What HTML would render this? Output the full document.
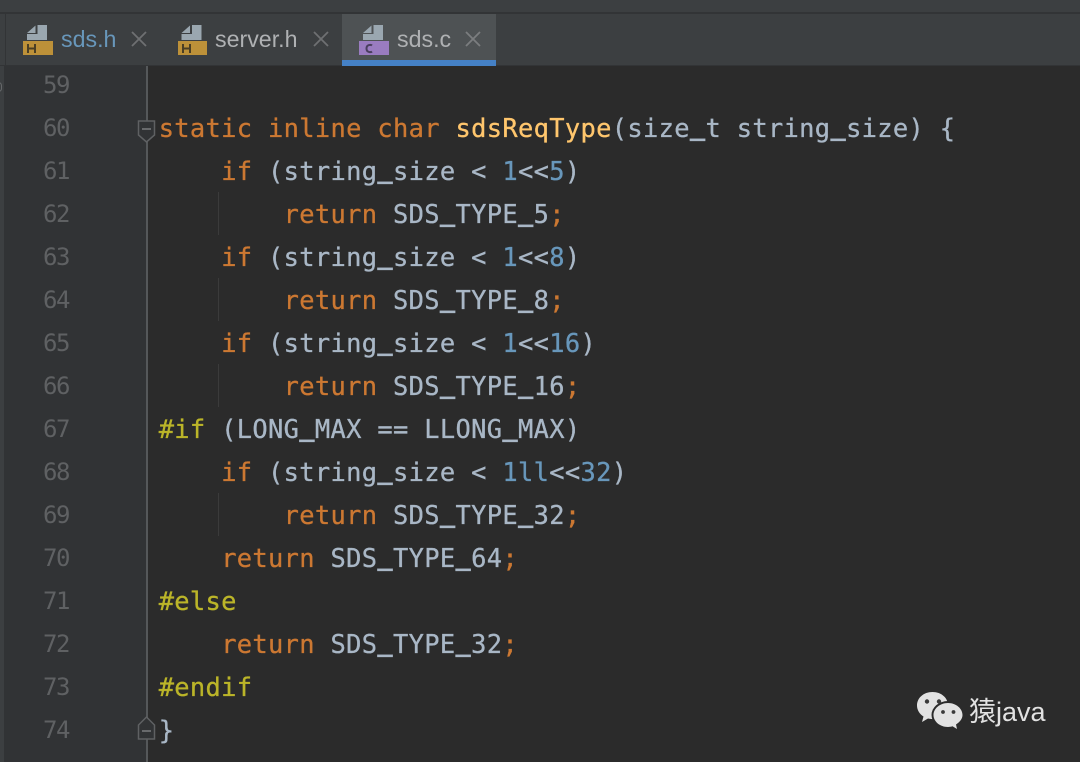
<!DOCTYPE html>
<html><head><meta charset="utf-8">
<style>
html,body{margin:0;padding:0;width:1080px;height:762px;overflow:hidden;background:#2b2b2b}
.a{position:absolute}
#tabs{left:0;top:0;width:1080px;height:66px;background:#3c3f41}
.tabt{position:absolute;top:24px;font:23.2px/30px "Liberation Sans",sans-serif;color:#afb1b3;white-space:pre}
.ln{position:absolute;left:43px;width:40px;font:24px/30px "DejaVu Sans Mono","Liberation Mono",monospace;letter-spacing:-1.4px;color:#5f6163;white-space:pre}
.c{position:absolute;left:158.700px;font:25.4px/32px "DejaVu Sans Mono","Liberation Mono",monospace;letter-spacing:.335px;color:#a9b7c6;white-space:pre;-webkit-text-stroke:.3px currentColor}
.k{color:#cc7832}.n{color:#6897bb}.f{color:#ffc66d}.p{color:#bbb529}
.u{position:relative;top:-2px;font-weight:bold}
.g{position:absolute;left:218px;width:1px;height:43px;background:#3b3b3b}
</style></head><body>
<div class="a" style="left:0;top:66px;width:5px;height:696px;background:#3c3f41"></div>
<div class="a" style="left:4px;top:66px;width:142px;height:696px;background:#313335"></div>
<div class="a" style="left:146px;top:66px;width:1.500px;height:696px;background:#55585a"></div>
<div class="a" id="tabs"></div>
<div class="a" style="left:0;top:12px;width:1080px;height:2px;background:#323436"></div>
<div class="a" style="left:5px;top:13px;width:1px;height:52px;background:#323436"></div>
<div class="a" style="left:342px;top:14px;width:154px;height:46px;background:#4e5254"></div>
<div class="a" style="left:342px;top:60px;width:154px;height:6px;background:#4581c6"></div>
<div class="a" style="left:0;top:65px;width:342px;height:1px;background:#323436"></div>
<div class="a" style="left:496px;top:65px;width:584px;height:1px;background:#323436"></div>
<svg class="a" style="left:0;top:0" width="520" height="66" viewBox="0 0 520 66">
<g><path d="M27 40h20V25H37.500V34H27z" fill="#9aa7b0"/><path d="M27 33L35.500 25.500V33z" fill="#9aa7b0"/><rect x="23" y="41" width="30" height="14" fill="#bd9139"/><path d="M28 44v9M35 44v9M28 48.500h7" stroke="#4b3f25" stroke-width="2" fill="none"/></g>
<path d="M132 32l14 14M146 32l-14 14" stroke="#6e7072" stroke-width="1.800" fill="none"/>
<g><path d="M181.500 40h20V25H192V34H181.500z" fill="#9aa7b0"/><path d="M181.500 33L190 25.500V33z" fill="#9aa7b0"/><rect x="178" y="41" width="29" height="14" fill="#bd9139"/><path d="M183 44v9M190 44v9M183 48.500h7" stroke="#4b3f25" stroke-width="2" fill="none"/></g>
<path d="M314 32l14 14M328 32l-14 14" stroke="#6e7072" stroke-width="1.800" fill="none"/>
<g><path d="M363 40h20V25H373.500V34H363z" fill="#9aa7b0"/><path d="M363 33L371.500 25.500V33z" fill="#9aa7b0"/><rect x="359" y="41" width="30" height="14" fill="#9a7cc0"/><path d="M372 45.500c-1-1-5.500-1.200-5.500 3s4.500 4 5.500 3" stroke="#4a3f5e" stroke-width="2" fill="none"/></g>
<path d="M466 32l14 14M480 32l-14 14" stroke="#7b7d7f" stroke-width="1.800" fill="none"/>
</svg>
<div class="tabt" style="left:61px;color:#6897bb">sds.h</div>
<div class="tabt" style="left:215px">server.h</div>
<div class="tabt" style="left:397px">sds.c</div>

<div class="a" style="left:0;top:78px;width:4px;height:16px;overflow:hidden"><div style="position:absolute;left:-5px;top:4px;width:5px;height:8px;border:1.500px solid #66686a;border-radius:4px"></div></div>

<div class="ln" style="top:70px">59</div>
<div class="ln" style="top:113px">60</div>
<div class="ln" style="top:156px">61</div>
<div class="ln" style="top:199px">62</div>
<div class="ln" style="top:242px">63</div>
<div class="ln" style="top:285px">64</div>
<div class="ln" style="top:328px">65</div>
<div class="ln" style="top:371px">66</div>
<div class="ln" style="top:414px">67</div>
<div class="ln" style="top:457px">68</div>
<div class="ln" style="top:500px">69</div>
<div class="ln" style="top:543px">70</div>
<div class="ln" style="top:586px">71</div>
<div class="ln" style="top:629px">72</div>
<div class="ln" style="top:672px">73</div>
<div class="ln" style="top:715px">74</div>

<svg class="a" style="left:130px;top:110px" width="34" height="40" viewBox="0 0 34 40"><path d="M8.500 11H24.500V25L16.500 32L8.500 25z" fill="#313335" stroke="#5f6163" stroke-width="1.500"/><path d="M12 19h9" stroke="#7a7c7e" stroke-width="1.500"/></svg>
<svg class="a" style="left:130px;top:710px" width="34" height="40" viewBox="0 0 34 40"><path d="M8.500 29H24.500V15L16.500 7L8.500 15z" fill="#313335" stroke="#5f6163" stroke-width="1.500"/><path d="M12 21h9" stroke="#7a7c7e" stroke-width="1.500"/></svg>

<div class="g" style="top:192px"></div>
<div class="g" style="top:278px"></div>
<div class="g" style="top:364px"></div>
<div class="g" style="top:493px"></div>

<div class="c" style="top:112px"><span class="k">static inline char </span><span class="f">sdsReqType</span>(size<span class="u">_</span>t string<span class="u">_</span>size) {</div>
<div class="c" style="top:155px">    <span class="k">if</span> (string<span class="u">_</span>size &lt; <span class="n">1</span>&lt;&lt;<span class="n">5</span>)</div>
<div class="c" style="top:198px">        <span class="k">return</span> SDS<span class="u">_</span>TYPE<span class="u">_</span>5<span class="k">;</span></div>
<div class="c" style="top:241px">    <span class="k">if</span> (string<span class="u">_</span>size &lt; <span class="n">1</span>&lt;&lt;<span class="n">8</span>)</div>
<div class="c" style="top:284px">        <span class="k">return</span> SDS<span class="u">_</span>TYPE<span class="u">_</span>8<span class="k">;</span></div>
<div class="c" style="top:327px">    <span class="k">if</span> (string<span class="u">_</span>size &lt; <span class="n">1</span>&lt;&lt;<span class="n">16</span>)</div>
<div class="c" style="top:370px">        <span class="k">return</span> SDS<span class="u">_</span>TYPE<span class="u">_</span>16<span class="k">;</span></div>
<div class="c" style="top:413px"><span class="p">#if</span> (LONG<span class="u">_</span>MAX == LLONG<span class="u">_</span>MAX)</div>
<div class="c" style="top:456px">    <span class="k">if</span> (string<span class="u">_</span>size &lt; <span class="n">1ll</span>&lt;&lt;<span class="n">32</span>)</div>
<div class="c" style="top:499px">        <span class="k">return</span> SDS<span class="u">_</span>TYPE<span class="u">_</span>32<span class="k">;</span></div>
<div class="c" style="top:542px">    <span class="k">return</span> SDS<span class="u">_</span>TYPE<span class="u">_</span>64<span class="k">;</span></div>
<div class="c" style="top:585px"><span class="p">#else</span></div>
<div class="c" style="top:628px">    <span class="k">return</span> SDS<span class="u">_</span>TYPE<span class="u">_</span>32<span class="k">;</span></div>
<div class="c" style="top:671px"><span class="p">#endif</span></div>
<div class="c" style="top:714px">}</div>

<svg class="a" style="left:912px;top:685px" width="56" height="50" viewBox="0 0 56 50">
<path d="M20.500 7C11.500 7 5 13 5 20.500C5 25 7.500 29 11.500 31.500L10 37L16 33.500C18 34 20 34.200 22 34C32 33 36 26 36 20.500C36 13 29.500 7 20.500 7z" fill="#e2e2e2"/>
<ellipse cx="36" cy="30" rx="16.500" ry="14" fill="#2b2b2b"/>
<path d="M36 18C28 18 21.500 23.500 21.500 30C21.500 36.500 28 42 36 42C37.500 42 39 41.800 40.500 41.300L45 44L44 39.500C47.800 37 50.500 33.800 50.500 30C50.500 23.500 44 18 36 18z" fill="#e2e2e2"/>
<circle cx="15" cy="16.500" r="2.200" fill="#3a3a3a"/><circle cx="27" cy="16.500" r="2.200" fill="#3a3a3a"/>
<circle cx="31" cy="27" r="1.900" fill="#3a3a3a"/><circle cx="41.500" cy="27" r="1.900" fill="#3a3a3a"/>
</svg>
<div class="a" style="left:969px;top:695px;font:27px/34px 'Liberation Sans','Noto Sans CJK SC',sans-serif;color:#e2e2e2;white-space:pre">猿java</div>
</body></html>
